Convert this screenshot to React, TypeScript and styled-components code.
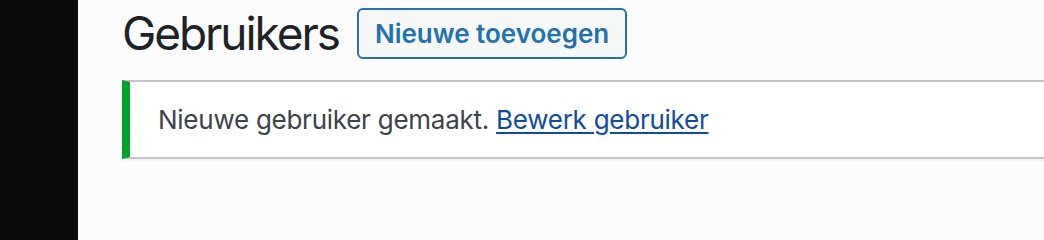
import styled, { createGlobalStyle } from "styled-components";

const GlobalStyle = createGlobalStyle`
  html, body {
    margin: 0;
    padding: 0;
    height: 100%;
    background: #fcfcfc;
  }
  body {
    font-family: Inter, "Noto Sans", "Liberation Sans", sans-serif;
    overflow: hidden;
  }
`;

const Layout = styled.div`
  display: flex;
  width: 1044px;
  height: 100vh;
  overflow: hidden;
`;

const Sidebar = styled.div`
  flex: 0 0 78px;
  background: #0b0b0b;
`;

const Main = styled.main`
  flex: 1;
  min-width: 0;
  padding: 3px 0 0 44px;
`;

const Header = styled.div`
  display: flex;
  align-items: center;
  gap: 18px;
  height: 60px;
`;

const Title = styled.h1`
  margin: 0;
  font-size: 46px;
  font-weight: 400;
  line-height: 60px;
  letter-spacing: -0.045em;
  color: #1d2327;
`;

const ActionButton = styled.a`
  display: inline-flex;
  align-items: center;
  box-sizing: border-box;
  height: 51px;
  padding: 0 16px;
  border: 2px solid #2271b1;
  border-radius: 6px;
  background: #f6f7f7;
  color: #2271b1;
  font-size: 26px;
  font-weight: 600;
  text-decoration: none;
`;

const Notice = styled.div<{ $tone: "success" | "error" }>`
  box-sizing: border-box;
  margin: 17px -40px 0 0;
  padding: 2px 24px;
  background: #fff;
  border: 2px solid #c3c4c7;
  border-left: 8px solid
    ${(p) => (p.$tone === "success" ? "#00a32a" : "#d63638")};
  box-shadow: 0 2px 2px rgba(0, 0, 0, 0.04);
`;

const NoticeText = styled.p`
  margin: 13px 0;
  padding: 4px;
  font-size: 26px;
  line-height: 37px;
  letter-spacing: -0.01em;
  color: #3c434a;
`;

const Link = styled.a`
  color: #0f4d9f;
  text-decoration: underline;
  text-underline-offset: 3px;
  text-decoration-thickness: 2px;
`;

export default function App() {
  return (
    <>
      <GlobalStyle />
      <Layout>
        <Sidebar />
        <Main>
          <Header>
            <Title>Gebruikers</Title>
            <ActionButton href="#">Nieuwe toevoegen</ActionButton>
          </Header>
          <Notice $tone="success">
            <NoticeText>
              Nieuwe gebruiker gemaakt. <Link href="#">Bewerk gebruiker</Link>
            </NoticeText>
          </Notice>
        </Main>
      </Layout>
    </>
  );
}
